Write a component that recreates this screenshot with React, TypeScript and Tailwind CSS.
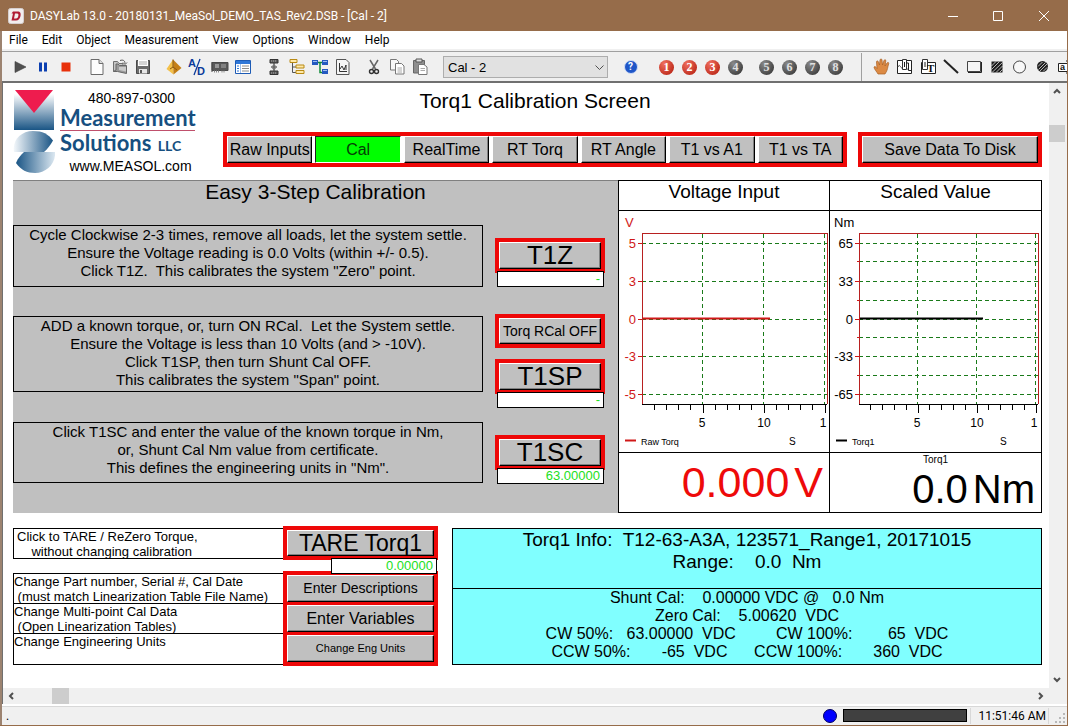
import type { ReactNode } from "react";
import { clsx } from "clsx";

type Tool = { label: string; icon: ReactNode };

function Icon({ children }: { children: ReactNode }) {
  return (
    <svg width="18" height="18" viewBox="0 0 18 18" fill="none" aria-hidden="true">
      {children}
    </svg>
  );
}

const runTools: Tool[] = [
  { label: "Start", icon: <Icon><path d="M4 3.5 15 9 4 14.5Z" fill="#505050" stroke="#3c3c3c" strokeWidth=".6" /></Icon> },
  { label: "Pause", icon: <Icon><path d="M5 4.5h3v9H5zM10 4.5h3v9h-3z" fill="#0c3fb0" /></Icon> },
  { label: "Stop", icon: <Icon><path d="M4.5 4.5h9v9h-9z" fill="#e8300a" /></Icon> },
];

const fileTools: Tool[] = [
  {
    label: "New",
    icon: (
      <Icon>
        <path d="M3 1.5h8l4 4v11H3z" fill="#fdfdfd" stroke="#6b6b6b" />
        <path d="M11 1.5v4h4" fill="#ddd" stroke="#6b6b6b" />
      </Icon>
    ),
  },
  {
    label: "Open",
    icon: (
      <Icon>
        <path d="M2.500 13.500v-10h4l1.500 2h4v3" fill="#c4c4c4" stroke="#707070" />
        <path d="M9 2.500c3-1 5 0 5 3m-2-1 2 2 2-2" stroke="#555" />
        <path d="M2.500 13.500h4l9 2v-8H8.500l-1.500-1.500H5v6z" fill="#9a9a9a" stroke="#666" />
        <path d="M8 9h7v4.500l-7-1.500z" fill="#c9c9c9" />
      </Icon>
    ),
  },
  {
    label: "Save",
    icon: (
      <Icon>
        <path d="M2.500 2.500h13v13h-13z" fill="#6d6d6d" stroke="#4a4a4a" />
        <path d="M4 2h10v6H4z" fill="#fff" />
        <path d="M5 4h8M5 6h8" stroke="#aaa" />
        <path d="M5 11h8v4.500H5z" fill="#e6e6e6" />
        <path d="M6 12h2v3H6z" fill="#555" />
      </Icon>
    ),
  },
];

const setupTools: Tool[] = [
  {
    label: "Setup",
    icon: (
      <Icon>
        <path d="M8 1.500 1.500 11 8.500 16.500Z" fill="#f3c04a" />
        <path d="M8 1.500 16.500 10 8.500 16.500Z" fill="#c47f16" />
        <path d="M8 1.500V9l-3 2M8 9l4 3" stroke="#8a560c" />
      </Icon>
    ),
  },
  {
    label: "A/D settings",
    icon: (
      <Icon>
        <text x="0" y="9" fontSize="11" fontWeight="700" fontFamily="Liberation Sans, sans-serif" fill="#0a3a9a">A</text>
        <text x="9" y="17" fontSize="11" fontWeight="700" fontFamily="Liberation Sans, sans-serif" fill="#0a3a9a">D</text>
        <path d="M12 1 6 17" stroke="#0a3a9a" strokeWidth="1.300" />
      </Icon>
    ),
  },
  {
    label: "Hardware",
    icon: (
      <Icon>
        <path d="M1 4v10M1 4.500h16v8H1z" fill="#5a5a5a" stroke="#4a4a4a" />
        <path d="M4 6h4v4H4z" fill="#999" />
        <path d="M10 7h5M10 9h5" stroke="#aaa" />
        <path d="M3 13.500h6M10.500 13.500h4" stroke="#888" strokeDasharray="1 1" strokeWidth="2" />
      </Icon>
    ),
  },
  {
    label: "Layout window",
    icon: (
      <Icon>
        <path d="M1.500 2.500h15v13h-15z" fill="#fff" stroke="#1d5bb5" />
        <path d="M2 3h14v3H2z" fill="#2f77d8" />
        <path d="M6.500 6v9" stroke="#9fc0ec" />
        <path d="M3 8h2M3 10.500h2M3 13h2" stroke="#2f77d8" />
        <path d="M8 8h7M8 10.500h7M8 13h7" stroke="#8c8c8c" />
      </Icon>
    ),
  },
];

const viewTools: Tool[] = [
  {
    label: "Align modules",
    icon: (
      <Icon>
        <path d="M5 1.500h8v3.500H5zM5 13h8v3.500H5z" fill="#5c5c5c" stroke="#333" />
        <path d="M6 3h6M6 15h6" stroke="#aaa" strokeDasharray="1 1" />
        <path d="M9 5v8M6 9h6" stroke="#333" />
        <path d="M6.500 9.500h5L9 12.500ZM6.500 8.500h5L9 6Z" fill="#777" />
      </Icon>
    ),
  },
  {
    label: "Module browser",
    icon: (
      <Icon>
        <path d="M4.500 4v10.500M4.500 9h4M4.500 14.500h4" stroke="#555" />
        <path d="M2 1.500h7v3H2zM8 7h8v3H8zM8 12.500h8v3H8z" fill="#ffe9a8" stroke="#b98a14" />
      </Icon>
    ),
  },
  {
    label: "Worksheet",
    icon: (
      <Icon>
        <path d="M6 4.500h6M9 4.500v10h3" stroke="#128a3a" strokeWidth="1.500" />
        <path d="M1 2h6v5H1zM11 2h6v5h-6zM11 11h6v5h-6z" fill="#2458c0" />
        <path d="M2 3h4v1H2zM12 3h4v1h-4zM12 12h4v1h-4z" fill="#9dbcf2" />
      </Icon>
    ),
  },
  {
    label: "Chart page",
    icon: (
      <Icon>
        <path d="M2.500 1.500h9.500l3 3v12H2.500z" fill="#f5f5f5" stroke="#555" />
        <path d="M5.500 5v8.500H13M6 11l2-3 2 4 2-5v5" stroke="#333" />
      </Icon>
    ),
  },
];

const editTools: Tool[] = [
  {
    label: "Cut",
    icon: (
      <Icon>
        <path d="M5 2l5.500 9M13 2 7.500 11" stroke="#666" strokeWidth="1.500" />
        <circle cx="6.500" cy="13.500" r="2" stroke="#333" strokeWidth="1.400" />
        <circle cx="11.500" cy="13.500" r="2" stroke="#333" strokeWidth="1.400" />
      </Icon>
    ),
  },
  {
    label: "Copy",
    icon: (
      <Icon>
        <path d="M2.500 1.500h6l2 2V12h-8z" fill="#f8f8f8" stroke="#777" />
        <path d="M7.500 5.500h6l2.500 2.500v8H7.500z" fill="#fff" stroke="#777" />
        <path d="M9.500 10h4.500M9.500 12h4.500M9.500 14h4.500" stroke="#aaa" />
      </Icon>
    ),
  },
  {
    label: "Paste",
    icon: (
      <Icon>
        <path d="M2.500 2.500h11V15h-11z" fill="#8e8e8e" stroke="#666" />
        <path d="M5 1h6v3H5z" fill="#ddd" stroke="#555" />
        <path d="M7.500 6.500H13l3 2.500v7.500H7.500z" fill="#fff" stroke="#777" />
        <path d="M9.500 10.500h4.500M9.500 12.500h4.500" stroke="#aaa" />
      </Icon>
    ),
  },
];

const drawTools: Tool[] = [
  {
    label: "Pan",
    icon: (
      <Icon>
        <path
          d="M5 16c-1-2-4-5-4-7 1-1 2 0 3 1.500L3.500 4c0-1.500 1.500-1.500 2 0L6.500 7 7 2c.3-1.500 1.800-1.500 2 0l.5 5 1.500-4.500c.5-1.300 2-1 1.800.5L12 8l2-3c.8-1.200 2.200-.5 1.700.8C14.500 9 15 12 12 16Z"
          fill="#dc8a44"
          stroke="#a85f22"
          strokeWidth=".7"
        />
      </Icon>
    ),
  },
  {
    label: "Chart object",
    icon: (
      <Icon>
        <path d="M1.500 2.500h14v13h-14z" fill="#fff" stroke="#222" />
        <path d="M2 9c2-5 3 4 5 0s3 4 6 2" stroke="#555" />
        <path d="M6.500 1.500h4v10h-4z" stroke="#333" fill="#fff" />
        <path d="M8.500 4v5M12.500 5v7.500H15M10 5h2.500" stroke="#222" />
      </Icon>
    ),
  },
  {
    label: "Text object",
    icon: (
      <Icon>
        <path d="M2.500 4.500h14v11h-14z" fill="#fff" stroke="#222" />
        <path d="M3.500 1.500h5v10h-5z" stroke="#333" fill="#fff" />
        <path d="M6 4v5" stroke="#222" />
        <text x="8" y="14" fontSize="11" fontWeight="700" fontFamily="Liberation Serif, serif" fill="#111">T</text>
      </Icon>
    ),
  },
  { label: "Line", icon: <Icon><path d="M2 2l14 13" stroke="#222" strokeWidth="2" /></Icon> },
  {
    label: "Rectangle",
    icon: (
      <Icon>
        <path d="M2.500 3.500h13v10h-13z" fill="#f5f5f5" stroke="#444" />
        <path d="M3 14.500h13.500V4" stroke="#222" />
      </Icon>
    ),
  },
  {
    label: "Filled rectangle",
    icon: (
      <Icon>
        <path d="M3.500 3.500h11v11h-11z" fill="#1c1c1c" />
        <path d="M3.500 8 8 3.500M3.500 11.500l8-8M4 14.500l10.500-10M8 14.500 14.500 8M11.500 14.500l3-3" stroke="#ddd" strokeWidth=".8" />
      </Icon>
    ),
  },
  { label: "Ellipse", icon: <Icon><circle cx="8.500" cy="9" r="6" fill="#f8f8f8" stroke="#444" /></Icon> },
  {
    label: "Filled ellipse",
    icon: (
      <Icon>
        <circle cx="8.500" cy="8.500" r="5.500" fill="#222" />
        <path d="M4 8.500l4.500-4.500M4.500 11.500 11.500 4.500M6 13l7-7M9 13.500l4-4" stroke="#ddd" strokeWidth=".8" />
      </Icon>
    ),
  },
  {
    label: "Input field",
    icon: (
      <Icon>
        <path d="M1.500 5.500h13v8h-13z" fill="#fff" stroke="#222" />
        <text x="3" y="12" fontSize="9" fontWeight="700" fontFamily="Liberation Sans, sans-serif" fill="#111">a</text>
        <path d="M9 3h3v12H9" stroke="#222" />
      </Icon>
    ),
  },
];

function ToolGroup({ tools }: { tools: Tool[] }) {
  return (
    <div className="flex shrink-0">
      {tools.map((tool) => (
        <button key={tool.label} type="button" aria-label={tool.label} className="flex h-6 w-[23px] items-center justify-center">
          {tool.icon}
        </button>
      ))}
    </div>
  );
}

function NumberGroup({ numbers }: { numbers: number[] }) {
  return (
    <div className="flex shrink-0 font-['Liberation_Serif',serif]">
      {numbers.map((n) => (
        <button key={n} type="button" aria-label={`Layout ${n}`} className="flex h-6 w-[23px] items-center justify-center">
          <span
            className={clsx(
              "flex size-[15px] items-center justify-center rounded-full text-[12px] leading-none font-bold",
              n <= 3
                ? "bg-radial-[at_35%_25%] from-[#f07060] to-[#b01808] text-white"
                : "bg-radial-[at_35%_25%] from-[#8a8a8a] to-[#2c2c2c] text-[#e0e0e0]",
            )}
          >
            {n}
          </span>
        </button>
      ))}
    </div>
  );
}

function TitleBar() {
  return (
    <header className="flex h-[31px] items-center bg-[#966c4a] pl-2 text-white">
      <svg width="16" height="16" viewBox="0 0 16 16" aria-hidden="true">
        <rect x=".5" y=".5" width="15" height="15" rx="2" fill="#f2eeee" stroke="#d6cfcf" />
        <path d="M5 3.500h4.500c3 0 3.500 2 3 4.500s-2 4.500-4.500 4.500H3.500L5 5.500H3.500Zm2 2L6 10.500h2c1.500 0 2-1 2.300-2.500s.3-2.500-1.300-2.500Z" fill="#b01c34" />
      </svg>
      <h1 className="ml-[6px] flex-1 text-[12px]">DASYLab 13.0 - 20180131_MeaSol_DEMO_TAS_Rev2.DSB - [Cal - 2]</h1>
      <button type="button" aria-label="Minimize" className="flex h-full w-[45px] items-center justify-center">
        <svg width="10" height="10"><path d="M0 5.500h10" stroke="#fff" /></svg>
      </button>
      <button type="button" aria-label="Maximize" className="flex h-full w-[45px] items-center justify-center">
        <svg width="10" height="10"><path d="M.5.5h9v9h-9z" stroke="#fff" fill="none" /></svg>
      </button>
      <button type="button" aria-label="Close" className="flex h-full w-[47px] items-center justify-center">
        <svg width="10" height="10"><path d="M0 0l10 10M10 0 0 10" stroke="#fff" /></svg>
      </button>
    </header>
  );
}

const menus = ["File", "Edit", "Object", "Measurement", "View", "Options", "Window", "Help"];

function MenuBar() {
  return (
    <nav className="flex h-5 items-center border-b-2 border-[#f0f0f0] bg-white text-[12px]">
      {menus.map((menu) => (
        <button key={menu} type="button" className="px-[7px] leading-[18px]">
          {menu}
        </button>
      ))}
    </nav>
  );
}

function Toolbar() {
  return (
    <div className="flex h-[30px] items-center overflow-hidden border-t border-[#a0a0a0] pt-px pl-[6px]">
      <div className="flex shrink-0 gap-2">
        <ToolGroup tools={runTools} />
        <ToolGroup tools={fileTools} />
        <ToolGroup tools={setupTools} />
        <ToolGroup tools={viewTools} />
        <ToolGroup tools={editTools} />
      </div>
      <div className="relative ml-3 w-[165px] shrink-0">
        <select
          aria-label="Layout page"
          className="block h-[22px] w-full appearance-none border border-[#adadad] bg-[#e1e1e1] px-1 font-['Liberation_Sans',Arial,sans-serif] text-[13px] leading-none"
        >
          <option>Cal - 2</option>
        </select>
        <svg className="pointer-events-none absolute top-[9px] right-1" width="9" height="6" fill="none">
          <path d="M.5.5l4 4 4-4" stroke="#505050" />
        </svg>
      </div>
      <button type="button" aria-label="Help" className="ml-[11px] flex h-6 w-[23px] shrink-0 items-center justify-center">
        <span className="flex size-[14px] items-center justify-center rounded-full border border-[#cfdcf5] bg-[#1f56c8] text-[10px] leading-none font-bold text-white">
          ?
        </span>
      </button>
      <div className="ml-[13px] flex shrink-0 gap-2">
        <NumberGroup numbers={[1, 2, 3, 4]} />
        <NumberGroup numbers={[5, 6, 7, 8]} />
      </div>
      <div className="mr-[8px] ml-[14px] h-full w-px shrink-0 bg-[#a0a0a0]" />
      <ToolGroup tools={drawTools} />
    </div>
  );
}

const bevel =
  "border border-t-white border-l-white border-r-black border-b-black bg-[#c0c0c0] shadow-[inset_-1px_-1px_0_#808080]";

function PanelButton({ children, className }: { children: ReactNode; className?: string }) {
  return (
    <div className={clsx("flex border-4 border-[#ee0808]", className)}>
      <button type="button" className={clsx("flex w-full items-center justify-center whitespace-nowrap", bevel)}>
        {children}
      </button>
    </div>
  );
}

function Readout({ label, value, className }: { label: string; value: string; className?: string }) {
  return (
    <output
      aria-label={label}
      className={clsx(
        "relative z-10 -mt-[2px] block h-4 border border-black bg-white pr-[3px] text-right text-[13px] leading-[14px] text-[#22e022]",
        className,
      )}
    >
      {value}
    </output>
  );
}

function Logo() {
  return (
    <div className="flex h-[84px] w-[210px] gap-[5px]">
      <svg width="42" height="84" viewBox="0 0 42 84" aria-hidden="true">
        <defs>
          <linearGradient id="down" x1="0" y1="0" x2="0" y2="1">
            <stop offset=".1" stopColor="#fff" />
            <stop offset="1" stopColor="#1a5585" />
          </linearGradient>
          <linearGradient id="right">
            <stop offset="0" stopColor="#f4f8fb" />
            <stop offset="1" stopColor="#1a5585" />
          </linearGradient>
          <linearGradient id="left">
            <stop offset="0" stopColor="#1a5585" />
            <stop offset="1" stopColor="#dce8f1" />
          </linearGradient>
        </defs>
        <path d="M1 0h40v40H1z" fill="url(#down)" />
        <path d="M2 0h38L21 23Z" fill="#ee1c4e" />
        <path d="M1 62C-1 50 8 41 20 41c10 0 15 3 20 9.500-3 5-5 8-9 11.500Z" fill="url(#right)" />
        <path d="M11 62h31c1 12-9 21-20 21-8 0-14-3-19-10 2-5 5-8 8-11Z" fill="url(#left)" />
      </svg>
      <div className="w-[135px] text-center text-[14px] text-black">
        <p className="ml-2 leading-[17px]">480-897-0300</p>
        <p className="h-[24px] border-b border-[#c0506c] text-left font-['Lato',sans-serif] text-[22px] leading-[22px] font-bold text-[#164f80]">
          Measurement
        </p>
        <p className="text-left font-['Lato',sans-serif] text-[22px] leading-[24px] font-bold text-[#164f80]">
          Solutions <span className="ml-px text-[14px]">LLC</span>
        </p>
        <p className="ml-[6px] leading-4">www.MEASOL.com</p>
      </div>
    </div>
  );
}

const screens = ["Raw Inputs", "Cal", "RealTime", "RT Torq", "RT Angle", "T1 vs A1", "T1 vs TA"];

function ScreenHeader() {
  return (
    <div className="flex pt-[7px] pb-[6px]">
      <Logo />
      <div className="flex h-[77px] min-w-0 flex-1 flex-col justify-between">
        <h2 className="text-center text-[21px] leading-[22px]">Torq1 Calibration Screen</h2>
        <nav className="flex h-[35px] gap-[3px] border-4 border-[#ee0808] text-[16px]">
          {screens.map((screen) => (
            <button
              key={screen}
              type="button"
              className={clsx(
                "min-w-0 flex-1 whitespace-nowrap",
                screen === "Cal"
                  ? "border border-t-[#202020] border-r-white border-b-white border-l-[#202020] bg-[#00ff00] text-[#063c06]"
                  : bevel,
              )}
            >
              {screen}
            </button>
          ))}
        </nav>
      </div>
      <PanelButton className="mt-[42px] ml-[11px] h-[35px] w-[184px] text-[16px]">Save Data To Disk</PanelButton>
    </div>
  );
}

function Instructions({ lines, className }: { lines: string[]; className?: string }) {
  return (
    <div className={clsx("flex-1 self-start border border-black text-center leading-[18px] whitespace-pre", className)}>
      {lines.map((line) => (
        <p key={line}>{line}</p>
      ))}
    </div>
  );
}

function CalibrationSteps() {
  return (
    <section className="border-t border-[#808080] bg-[#c0c0c0] text-[15px]">
      <h2 className="text-center text-[21px] leading-[22px]">Easy 3-Step Calibration</h2>
      <div className="mt-[22px] flex gap-3 pr-[13px]">
        <Instructions
          className="h-[62px]"
          lines={[
            "Cycle Clockwise 2-3 times, remove all loads, let the system settle.",
            "Ensure the Voltage reading is 0.0 Volts (within +/- 0.5).",
            'Click T1Z.  This calibrates the system "Zero" point.',
          ]}
        />
        <div className="w-[110px] pt-[13px]">
          <PanelButton className="h-[35px] text-[26px]">T1Z</PanelButton>
          <Readout label="T1Z value" value="-" className="mx-px ml-[2px]" />
        </div>
      </div>
      <div className="mt-[27px] flex gap-3 pr-[13px]">
        <Instructions
          className="mt-[2px] h-[76px]"
          lines={[
            "ADD a known torque, or, turn ON RCal.  Let the System settle.",
            "Ensure the Voltage is less than 10 Volts (and > -10V).",
            "Click T1SP, then turn Shunt Cal OFF.",
            'This calibrates the system "Span" point.',
          ]}
        />
        <div className="w-[110px]">
          <PanelButton className="h-[34px] text-[14px]">Torq RCal OFF</PanelButton>
          <PanelButton className="mt-[11px] h-[35px] text-[26px]">T1SP</PanelButton>
          <Readout label="T1SP value" value="-" className="mx-px ml-[2px]" />
        </div>
      </div>
      <div className="mt-[14px] flex gap-3 pr-[13px]">
        <Instructions
          className="h-[61px]"
          lines={[
            "Click T1SC and enter the value of the known torque in Nm,",
            "or, Shunt Cal Nm value from certificate.",
            'This defines the engineering units in "Nm".',
          ]}
        />
        <div className="w-[110px] pt-[13px]">
          <PanelButton className="h-[35px] text-[26px]">T1SC</PanelButton>
          <Readout label="T1SC value" value="63.00000" className="mx-px ml-[2px]" />
        </div>
      </div>
    </section>
  );
}

const rowYs = [32, 70, 108, 145, 183];

function Chart({
  unit,
  labels,
  left,
  legend,
  color,
  minor = [],
}: {
  unit: string;
  labels: string[];
  left: number;
  legend: string;
  color: string;
  minor?: number[];
}) {
  const right = 208;
  const step = (right - 2 - left) / 15;
  return (
    <svg width="210" height="241" viewBox="0 0 210 241" className="block font-['Liberation_Sans',Arial,sans-serif]" role="img" aria-label={legend}>
      <text x={unit === "V" ? 6 : 4} y="16" fontSize="13" fill={unit === "V" ? color : "#000"}>{unit}</text>
      <g stroke="#1a7a1a" strokeDasharray="4 3" shapeRendering="crispEdges">
        {[...rowYs, ...minor].map((y) => (
          <path key={y} d={`M${left} ${y + 0.5}H${right}`} />
        ))}
        {[5, 10, 15].map((n) => (
          <path key={n} d={`M${Math.floor(left + n * step) - 0.5} 22.500V193`} />
        ))}
      </g>
      <path d={`M${left + 0.5} 193V22.500H${right + 0.5}V193`} fill="none" stroke="#b82020" shapeRendering="crispEdges" />
      <g stroke="#d01818" shapeRendering="crispEdges">
        {rowYs.map((y) => (
          <path key={y} d={`M${left - 4} ${y + 0.5}H${left}`} />
        ))}
        {minor.map((y) => (
          <path key={y} d={`M${left - 2} ${y + 0.5}H${left}`} />
        ))}
      </g>
      <path d={`M${left} 193.500H${right}`} stroke="#000" shapeRendering="crispEdges" />
      {Array.from({ length: 15 }, (_, i) => (
        <path
          key={i}
          d={`M${left + (i + 1) * step} 194v${(i + 1) % 5 === 0 ? 8 : 5}`}
          stroke="#000"
          shapeRendering="crispEdges"
        />
      ))}
      <path d={`M${left + 1} 107.500h${Math.round(step * 10.4)}`} stroke={color} strokeWidth="2" />
      <g fontSize="13" textAnchor="end" fill={unit === "V" ? color : "#000"}>
        {labels.map((label, i) => (
          <text key={label} x={left - 6} y={rowYs[i] + 5}>{label}</text>
        ))}
      </g>
      <g fontSize="12" textAnchor="middle">
        <text x={left + 5 * step - 1} y="216">5</text>
        <text x={left + 10 * step} y="216">10</text>
        <text x={left + 15 * step - 2} y="216">1</text>
      </g>
      <path d="M6 229.500h11" stroke={color} strokeWidth="2" />
      <text x="22" y="234" fontSize="9">{legend}</text>
      <text x="170" y="234" fontSize="10">S</text>
    </svg>
  );
}

function Meters() {
  return (
    <section className="grid grid-cols-[211px_minmax(0,1fr)] grid-rows-[30px_242px_60px] border-t border-l border-black bg-white *:overflow-hidden *:border-r *:border-b *:border-black">
      <h2 className="text-center text-[19px] leading-[22px]">Voltage Input</h2>
      <h2 className="text-center text-[19px] leading-[22px]">Scaled Value</h2>
      <div>
        <Chart unit="V" labels={["5", "3", "0", "-3", "-5"]} left={23} legend="Raw Torq" color="#d01818" />
      </div>
      <div>
        <Chart
          unit="Nm"
          labels={["65", "33", "0", "-33", "-65"]}
          left={29}
          legend="Torq1"
          color="#000"
          minor={[50, 89, 126, 164]}
        />
      </div>
      <p className="flex items-center justify-end gap-[5px] pr-[6px] text-[43px] leading-none text-[#ee0a0a]">
        <span>0.000</span>
        <span>V</span>
      </p>
      <div className="text-center">
        <p className="text-[10px] leading-[13px]">Torq1</p>
        <p className="flex justify-end gap-[5px] pt-[3px] pr-[6px] text-[40px] leading-[40px]">
          <span>0.0</span>
          <span>Nm</span>
        </p>
      </div>
    </section>
  );
}

function SetupActions() {
  return (
    <section className="w-[425px] shrink-0 text-[13px]">
      <div className="flex">
        <p className="mt-[2px] h-[31px] flex-1 border border-r-0 border-black pl-[3px] leading-[15px] whitespace-pre">
          {"Click to TARE / ReZero Torque,\n    without changing calibration"}
        </p>
        <PanelButton className="h-[34px] w-[155px] text-[23px]">TARE Torq1</PanelButton>
      </div>
      <Readout label="Tare value" value="0.00000" className="mr-px ml-auto w-[106px]" />
      <div className="-mt-[3px] flex items-start">
        <div className="mt-[2px] flex-1 border-l border-black leading-[15px] whitespace-pre *:border-t *:border-black">
          <p className="h-[30px]">{"Change Part number, Serial #, Cal Date\n (must match Linearization Table File Name)"}</p>
          <p className="h-[30px]">{"Change Multi-point Cal Data\n (Open Linearization Tables)"}</p>
          <p className="h-8 border-b">Change Engineering Units</p>
        </div>
        <div className="flex w-[155px] flex-col gap-[3px] bg-[#ee0808] p-1">
          <button type="button" className={clsx("h-[27px] text-[14px]", bevel)}>Enter Descriptions</button>
          <button type="button" className={clsx("h-[27px] text-[16px]", bevel)}>Enter Variables</button>
          <button type="button" className={clsx("h-[27px] text-[11px]", bevel)}>Change Eng Units</button>
        </div>
      </div>
    </section>
  );
}

function TorqueInfo() {
  return (
    <section className="mt-[2px] h-[137px] min-w-0 flex-1 border border-black bg-[#80ffff] text-center whitespace-pre">
      <div className="h-[60px] border-b border-black text-[19px] leading-[22px]">
        <p>{"Torq1 Info:  T12-63-A3A, 123571_Range1, 20171015"}</p>
        <p>{"Range:    0.0  Nm"}</p>
      </div>
      <div className="text-[16px] leading-[18px]">
        <p>{"Shunt Cal:    0.00000 VDC @   0.0 Nm"}</p>
        <p>{"Zero Cal:    5.00620  VDC"}</p>
        <p>{"CW 50%:   63.00000  VDC         CW 100%:        65  VDC"}</p>
        <p>{"CCW 50%:       -65  VDC      CCW 100%:       360  VDC"}</p>
      </div>
    </section>
  );
}

function Arrow({ label, d }: { label: string; d: string }) {
  return (
    <button type="button" aria-label={label} className="flex size-4 items-center justify-center">
      <svg width="8" height="8" fill="none">
        <path d={d} stroke="#505050" strokeWidth="2" />
      </svg>
    </button>
  );
}

function StatusBar() {
  return (
    <footer className="flex h-[21px] items-center border-t-2 border-white bg-[#f0f0f0] pl-1 text-[12px] shadow-[inset_0_1px_0_#d8d8d8]">
      <span className="flex-1">.</span>
      <span className="size-[14px] rounded-full border border-[#000060] bg-[#0000ff]" />
      <span className="ml-[6px] h-[13px] w-[124px] border border-black bg-[#404040]" />
      <span className="ml-[3px] border-x border-[#d8d8d8] pr-[2px] pl-[7px] leading-4">11:51:46 AM</span>
      <svg width="18" height="16" viewBox="0 0 18 16" fill="#b8b8b8" aria-hidden="true">
        <path d="M14 5h2v2h-2zM14 9h2v2h-2zM14 13h2v2h-2zM10 9h2v2h-2zM10 13h2v2h-2zM6 13h2v2H6z" />
      </svg>
    </footer>
  );
}

export default function App() {
  return (
    <div className="flex min-h-screen flex-col border-r border-b border-[#966c4a] bg-[#f0f0f0] font-['Roboto','Noto_Sans',sans-serif] text-black">
      <TitleBar />
      <div className="flex flex-1 flex-col border-l-2 border-[#9c8370]">
        <MenuBar />
        <Toolbar />
        <div className="flex flex-1 flex-col border-t-2 border-l border-[#707070]">
          <div className="flex flex-1 pr-[2px]">
            <main className="min-w-0 flex-1 bg-white pr-[7px] pl-[10px] font-['Liberation_Sans',Arial,sans-serif]">
              <ScreenHeader />
              <div className="grid grid-cols-[minmax(0,1fr)_424px]">
                <CalibrationSteps />
                <Meters />
              </div>
              <div className="mt-[13px] flex gap-[14px]">
                <SetupActions />
                <TorqueInfo />
              </div>
            </main>
            <div className="flex w-4 flex-col">
              <Arrow label="Scroll up" d="M1 6l3-3 3 3" />
              <div className="mt-[26px] h-[17px] bg-[#cdcdcd]" />
              <div className="flex-1" />
              <Arrow label="Scroll down" d="M1 2l3 3 3-3" />
            </div>
          </div>
          <div className="flex h-4 pr-[18px]">
            <Arrow label="Scroll left" d="M6 1 3 4l3 3" />
            <div className="ml-[33px] w-[17px] bg-[#cdcdcd]" />
            <div className="flex-1" />
            <Arrow label="Scroll right" d="M2 1l3 3-3 3" />
          </div>
        </div>
        <StatusBar />
      </div>
    </div>
  );
}
